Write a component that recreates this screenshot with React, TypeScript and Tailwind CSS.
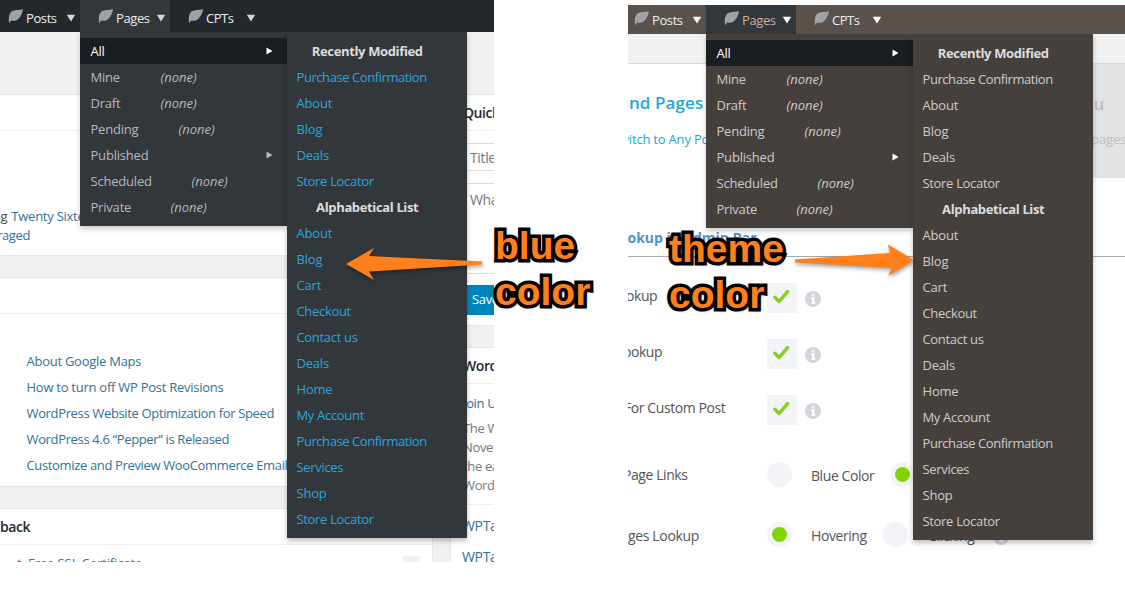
import React from "react";

type Theme = "blue" | "brown";

const base = "font-['Open_Sans','Noto_Sans',sans-serif]";

function Feather() {
  return (
    <svg width="16" height="16" viewBox="0 0 16 16" className="shrink-0">
      <path d="M1 13.8 C0.6 9.5 0.6 5.4 3.4 2.4 C6.6 0.6 11.2 1.4 15 0.2 C14.4 3.8 13.4 5.8 12.4 7.2 L11.4 8.6 C10 10.8 8.4 11.6 6.6 11.8 C5 12 3.6 11.6 2.6 12 L1.6 13.8 Z" fill="#a0a4a7" />
      <path d="M2 12.4 C3.8 8.8 7.6 5.6 12 3.2" stroke="#8d9296" strokeWidth="0.6" fill="none" />
    </svg>
  );
}

function Caret({ className = "" }: { className?: string }) {
  return (
    <svg width="10" height="8" viewBox="0 0 10 8" className={`shrink-0 ${className}`}>
      <path d="M0.8 0.8 H9.2 L5 7.4 Z" fill="currentColor" />
    </svg>
  );
}

function BarItem({ label, className, textClass, caretClass }: { label: string; className: string; textClass: string; caretClass: string }) {
  return (
    <div className={`flex h-8 shrink-0 items-start ${className}`}>
      <div className="pt-[9px]"><Feather /></div>
      <span className={`pt-2 pl-[2px] leading-5 ${textClass}`}>{label}</span>
      <Caret className={`mt-[14px] ${caretClass}`} />
    </div>
  );
}

function AdminBar({ theme }: { theme: Theme }) {
  const blue = theme === "blue";
  const caret = blue ? "text-[#d5d6d7]" : "text-white";
  return (
    <div className={`flex h-8 shrink-0 text-[13px] text-[#eeeeee] ${blue ? "bg-[#23282d]" : "bg-[#59524c]"}`}>
      <BarItem label="Posts" className="w-20 pl-2" textClass="w-[42px] tracking-[-0.4px]" caretClass={caret} />
      <BarItem label="Pages" className="w-[90px] bg-[#32373c] pl-[18px]" textClass={blue ? "w-[42px] tracking-[-0.4px]" : "w-[42px] tracking-[-0.4px] text-[#cfb0a0]"} caretClass={caret} />
      <BarItem label="CPTs" className="w-[100px] pl-[18px]" textClass="w-[42px] tracking-[-0.5px]" caretClass={caret} />
    </div>
  );
}

const statuses = [
  { label: "All", width: "", arrow: true },
  { label: "Mine", width: "w-[70px]", arrow: false },
  { label: "Draft", width: "w-[70px]", arrow: false },
  { label: "Pending", width: "w-[88px]", arrow: false },
  { label: "Published", width: "", arrow: true },
  { label: "Scheduled", width: "w-[101px]", arrow: false },
  { label: "Private", width: "w-[80px]", arrow: false },
];

const recent = ["Purchase Confirmation", "About", "Blog", "Deals", "Store Locator"];
const all = ["About", "Blog", "Cart", "Checkout", "Contact us", "Deals", "Home", "My Account", "Purchase Confirmation", "Services", "Shop", "Store Locator"];

function Dropdown({ theme }: { theme: Theme }) {
  const blue = theme === "blue";
  const bg = blue ? "bg-[#32373c]" : "bg-[#46403c]";
  const text = blue ? "text-[#b4b9be]" : "text-[#cdcbc9]";
  const link = blue ? "text-[#2ba6dc]" : "text-[#cdcbc9]";
  return (
    <div className="absolute top-8 left-20 flex items-start text-[13px]">
      <div className={`w-[207px] pt-[6px] pb-[6px] tracking-[-0.2px] shadow-[0_3px_5px_rgba(0,0,0,0.2)] ${bg} ${text}`}>
        {statuses.map((s, i) => (
          <div key={s.label} className={`flex h-[26px] items-center pl-[10.5px] ${i === 0 ? "bg-[#191e23] text-white" : ""}`}>
            <span className={`pt-px ${s.width}`}>{s.label}</span>
            {!s.arrow && <em className="pt-px tracking-[0px]">(none)</em>}
            {s.arrow && (
              <svg width="7" height="8" viewBox="0 0 7 8" className={`mr-[14px] ml-auto ${blue ? "" : "text-white"}`}>
                <path d="M0.5 0.5 V7.5 L6.5 4 Z" fill="currentColor" />
              </svg>
            )}
          </div>
        ))}
      </div>
      <div className={`relative w-[180px] pt-[6px] pb-[6px] pl-[9.5px] tracking-[-0.32px] shadow-[0_3px_5px_rgba(0,0,0,0.25)] ${bg} ${link}`}>
        <Heading>Recently Modified</Heading>
        {recent.map((r) => <MenuLink key={r}>{r}</MenuLink>)}
        <Heading>Alphabetical List</Heading>
        {all.map((r) => <MenuLink key={r}>{r}</MenuLink>)}
      </div>
    </div>
  );
}

function MenuLink({ children }: { children: string }) {
  return <div className={`h-[26px] leading-[26px] ${children.length < 7 ? "tracking-[-0.2px]" : children.length > 15 ? "tracking-[-0.43px]" : ""}`}>{children}</div>;
}

function Heading({ children }: { children: React.ReactNode }) {
  return <div className="-ml-[10px] h-[26px] pr-[19px] text-center leading-[26px] font-bold tracking-[-0.36px] text-[#dddddd]">{children}</div>;
}

const news = ["About Google Maps", "How to turn off WP Post Revisions", "WordPress Website Optimization for Speed", "WordPress 4.6 “Pepper” is Released", "Customize and Preview WooCommerce Emails"];

function Dashboard() {
  const card = "shrink-0 border-y border-[#e5e5e5] bg-white";
  const title = "h-9 border-b border-[#eeeeee] text-[14px] leading-9 font-semibold tracking-[-0.45px] text-[#23282d]";
  return (
    <div className="flex h-[530px] bg-[#f1f1f1] pt-[62px] text-[13px] tracking-[-0.35px] whitespace-nowrap text-[#444444]">
      <div className="flex w-[433px] shrink-0 flex-col gap-[21px]">
        <div className={`${card} h-[162px] border-r`}>
          <div className="h-9 border-b border-[#eeeeee]" />
          <div className="-ml-[7px] pt-[76px] leading-[19px]">
            <div>ng <span className="pl-[1px] tracking-[-0.25px] text-[#2f7394]">Twenty Sixteen</span></div>
            <div className="-ml-[3px] text-[#2f7394]">eraged</div>
          </div>
        </div>
        <div className={`${card} h-[210px] border-r`}>
          <div className="h-9 border-b border-[#eeeeee]" />
          <div className="pt-[34px] pl-[26.5px] text-[#2f7394]">
            {news.map((n) => <div key={n} className={`h-[26px] leading-[26px] ${n.length < 34 ? "tracking-[-0.26px]" : ""}`}>{n}</div>)}
          </div>
        </div>
        <div className={`${card} h-[70px] overflow-hidden border-r`}>
          <div className={`${title} leading-[35px]`}>back</div>
          <div className="flex items-start pt-[11px]">
            <span className="-mt-[2px] w-[403px] pl-[17px] tracking-[-0.1px] text-[#2f7394]">t, Free SSL Certificate</span>
            <span className="h-5 w-[17px] bg-[#f1f1f1]" />
          </div>
        </div>
      </div>
      <div className="ml-[17px] flex w-[300px] shrink-0 flex-col gap-[21px]">
        <div className={`${card} h-[232px] border-l`}>
          <div className={`${title} pl-3`}>Quick Draft</div>
          <div className="pt-[12px] pl-3 text-[14px] text-[#777777]">
            <div className="h-7 border border-[#dddddd] pl-[6px] leading-[27px]">Title</div>
            <div className="mt-[12px] h-[91px] border border-[#dddddd] pt-[5px] pl-[6px]">What’s on your mind?</div>
            <div className="mt-[11px] h-[30px] w-20 bg-[#0085ba] pl-[9px] text-[13px] leading-[29px] text-white">Save Draft</div>
          </div>
        </div>
        <div className={`${card} h-[250px] border-l`}>
          <div className={`${title} pl-3`}>WordPress News</div>
          <div className="pt-[9px] pl-3">
            <div className="leading-5 text-[#2f7394]">Join Us</div>
            <div className="h-[92px] border-b border-[#eeeeee] pt-[6px] leading-[19px] text-[#777777]">
              <div>The WordPress</div><div>November</div><div>the earlier</div><div>WordPress</div>
            </div>
            <div className="-ml-px pt-[10px] text-[14px] leading-[22px] text-[#2f7394]">WPTavern</div>
            <div className="-ml-px pt-[9px] text-[14px] leading-[22px] text-[#2f7394]">WPTavern</div>
          </div>
        </div>
      </div>
    </div>
  );
}

function Info() {
  return (
    <svg width="16" height="16" viewBox="0 0 16 16" className="shrink-0">
      <circle cx="8" cy="8" r="8" fill="#d4d5dc" />
      <path d="M6.8 2.8 h2.6 v2 h-2.6 Z M6 6.3 h3.4 v5 h1 v1.5 H6 v-1.5 h1 V7.8 H6 Z" fill="#fff" />
    </svg>
  );
}

function CheckRow({ label, width }: { label: string; width: string }) {
  return (
    <div className="flex h-14 items-start">
      <span className={`mt-[3px] flex shrink-0 justify-start leading-5 ${width}`}>{label}</span>
      <span className="flex h-[30px] w-[30px] shrink-0 items-start justify-center bg-[#f3f4f8] pt-[6px] pr-[2px]">
        <svg width="17" height="16" viewBox="0 0 17 16"><path d="M2 8.2 L6 12.6 L14.6 2.6" fill="none" stroke="#84d01c" strokeWidth="3.4" strokeLinecap="round" strokeLinejoin="round" /></svg>
      </span>
      <span className="mt-2 ml-[8px]"><Info /></span>
    </div>
  );
}

function Radio({ on = false }: { on?: boolean }) {
  return (
    <span className="flex h-[25px] w-[25px] shrink-0 items-center justify-center rounded-full bg-[#f3f4f8]">
      {on && <span className="mr-px mb-px h-[15px] w-[15px] rounded-full bg-[#80d400]" />}
    </span>
  );
}

function Settings() {
  return (
    <div className="h-[530px] w-[499px] overflow-hidden bg-white text-[14px] tracking-[-0.42px] whitespace-nowrap text-[#555555]">
      <div className="h-[30px] border-b border-[#d5d5d5] bg-[#f1f1f1]" />
      <div className="flex h-[114px]">
        <div className="w-[287px] pt-[25px] text-[#22a7d0]">
          <div className="-ml-[7px] text-[17px] leading-7 font-semibold tracking-[0.1px]">and Pages</div>
          <div className="-ml-[7px] pt-[12px] text-[13px] leading-5 tracking-[-0.2px]">witch to Any Post</div>
        </div>
        <div className="w-[212px] bg-[#e3e3e3] pt-[26px] text-right text-[#bdbdbd]">
          <div className="pr-[21px] text-[17px] leading-7 font-semibold">u</div>
          <div className="-mr-[1px] pt-[11px] text-[13px] leading-5 tracking-[-0.2px]">pages</div>
        </div>
      </div>
      <div className="h-[79px] border-b border-[#aaaaaa] pt-[50px]">
        <div className="-ml-[7px] text-[14px] leading-5 font-bold tracking-[-0.05px] text-[#4d91d1]">ookup in Admin Bar</div>
      </div>
      <div className="pt-[26px]">
        <CheckRow label="ookup" width="-ml-[8px] w-[149px]" />
        <CheckRow label="Lookup" width="-ml-[10px] w-[151px]" />
        <CheckRow label="For Custom Post" width="-ml-[2px] w-[143px]" />
      </div>
      <div className="flex h-[61px] items-start pt-[11px]">
        <span className="-ml-[3px] w-[144px] shrink-0 leading-[26px]">Page Links</span>
        <Radio />
        <span className="w-[98px] pl-[19px] leading-[28px]">Blue Color</span>
        <Radio on />
      </div>
      <div className="flex items-start pt-[10px]">
        <span className="w-[141px] shrink-0 pl-[2px] tracking-[-0.35px] leading-[27px]">ges Lookup</span>
        <Radio on />
        <span className="w-[91px] pl-[19px] leading-[28px]">Hovering</span>
        <Radio />
        <span className="w-[85px] pl-[20px] leading-[28px]">Clicking</span>
        <span className="mt-[7px]"><Info /></span>
      </div>
    </div>
  );
}

const note = "absolute font-['Liberation_Sans',Arial,sans-serif] text-[39px] leading-[46px] font-bold text-[#ff7f1a] [-webkit-text-stroke:7px_#000] [paint-order:stroke_fill] [text-shadow:2px_3px_3px_rgba(0,0,0,0.35)]";

export default function App() {
  return (
    <main className={`relative flex h-[593px] w-[1125px] items-start justify-between overflow-hidden bg-white ${base}`}>
      <section className="relative h-[562px] w-[494px] overflow-hidden">
        <AdminBar theme="blue" />
        <Dashboard />
        <Dropdown theme="blue" />
      </section>
      <section className="mt-[5px] h-[560px] w-[497px] overflow-hidden">
        <div className="relative -mt-[3px] -ml-[2px] w-[499px]">
          <AdminBar theme="brown" />
          <Settings />
          <Dropdown theme="brown" />
        </div>
      </section>
      <svg width="1125" height="593" className="pointer-events-none absolute inset-0 drop-shadow-[1px_2px_2px_rgba(0,0,0,0.4)]">
        <path d="M346 264 L374 248 L369 256 L482 261.5 V264.5 L369 271.5 L374 280 Z M914 260 L888 244.5 L890 253 L795 259.5 V262.5 L892 268 L888 276 Z" fill="#ff7f1a" />
      </svg>
      <div className={`${note} top-[223px] left-[495px]`}>blue<br />color</div>
      <div className={`${note} top-[226px] left-[669px]`}>theme<br />color</div>
    </main>
  );
}
